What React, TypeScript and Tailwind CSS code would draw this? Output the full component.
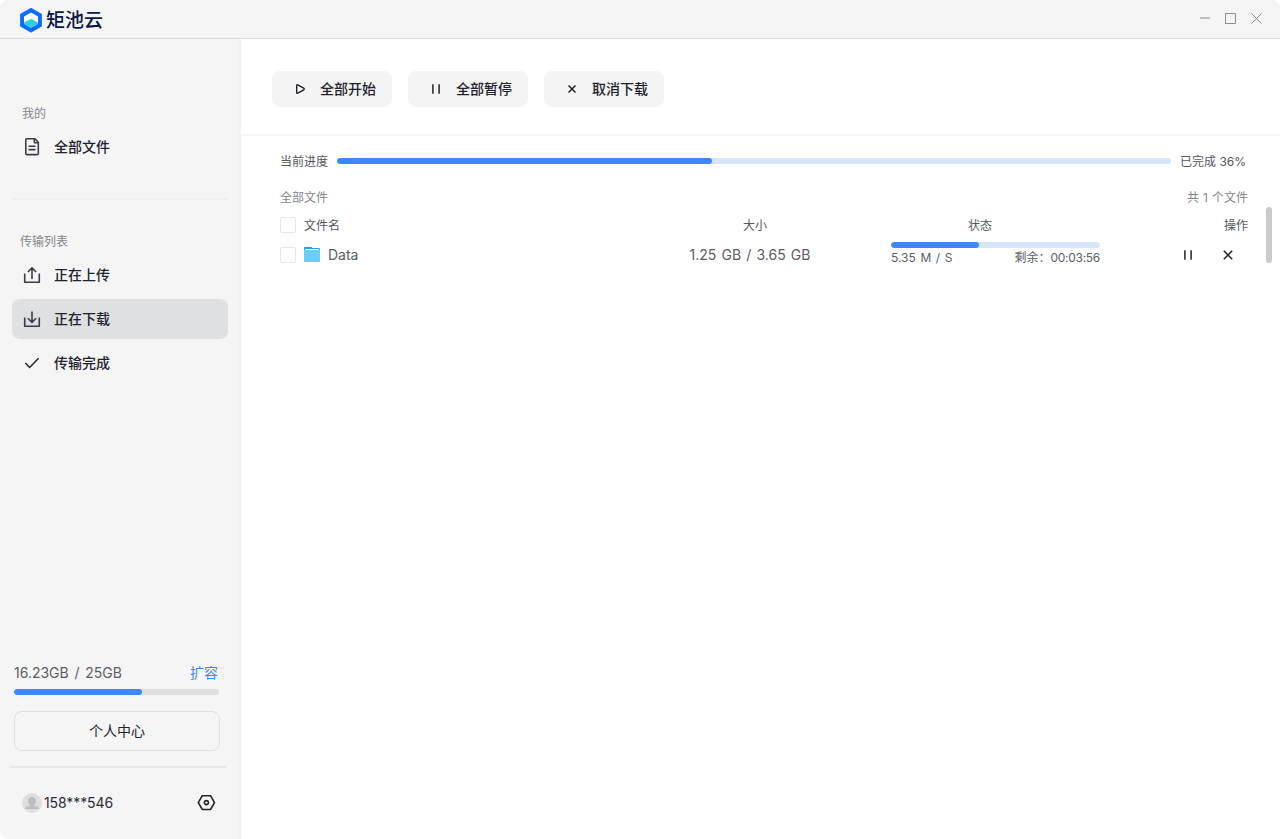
import type { ReactNode } from "react";
import clsx from "clsx";

const TABLE_GRID = "grid grid-cols-[370px_200px_41px_209px_148px] items-center";

function Logo() {
  return (
    <svg className="h-[26px] w-[22px]" viewBox="0 0 22 26" fill="none">
      <path d="M11 1.200 21.600 7.200v12L11 25.200.4 19.200v-12Z" fill="#0a6cff" stroke="#0a6cff" strokeWidth=".8" strokeLinejoin="round" />
      <path d="M11 5.400 18 9.400v7.400L11 20.800 4 16.800V9.400Z" fill="#fff" />
      <path d="M4 15.700 9.600 12.500q1.400-.8 2.800 0l5.600 3.200v1.100L11 20.800l-7-4Z" fill="#2bd0dc" />
    </svg>
  );
}

function FileIcon() {
  return (
    <svg className="h-5 w-5" viewBox="0 0 20 20" fill="none" stroke="#3c3c48" strokeWidth="1.600" strokeLinejoin="round">
      <path d="M4.600 1.800h8.400l3.300 3.400v11.400q0 1-1 1H4.800q-1 0-1-1V2.600q0-.8.8-.8Z" />
      <path d="M12.400 1.800v4h3.900" />
      <path d="M6.500 9.300h7M6.500 12.600h7" />
    </svg>
  );
}

function UploadIcon() {
  return (
    <svg className="h-5 w-5" viewBox="0 0 20 20" fill="none" stroke="#3c3c48" strokeWidth="1.600" strokeLinejoin="round">
      <path d="M2.700 8.500v8.700h14.600V8.500" />
      <path d="M10 14V3.200M5.900 7 10 2.900 14.100 7" />
    </svg>
  );
}

function DownloadIcon() {
  return (
    <svg className="h-5 w-5" viewBox="0 0 20 20" fill="none" stroke="#3c3c48" strokeWidth="1.600" strokeLinejoin="round">
      <path d="M2.700 8.500v8.700h14.600V8.500" />
      <path d="M10 2.500v10.700M5.900 9.300l4.100 4.100 4.100-4.100" />
    </svg>
  );
}

function DoneIcon() {
  return (
    <svg className="h-5 w-5" viewBox="0 0 20 20" fill="none" stroke="#22222e" strokeWidth="1.500">
      <path d="m3.400 10.100 4.200 4.300 9-9.200" />
    </svg>
  );
}

function PlayIcon() {
  return (
    <svg className="h-4 w-4" viewBox="0 0 16 16" fill="none" stroke="#22222e" strokeWidth="1.400" strokeLinejoin="round">
      <path d="M4.700 4.600q0-1.200 1.100-.8l5.900 3.300q1.100.8 0 1.700l-5.900 3.400q-1.100.4-1.100-.8Z" />
    </svg>
  );
}

function PauseIcon() {
  return (
    <svg className="h-4 w-4" viewBox="0 0 16 16" fill="none" stroke="#22222e" strokeWidth="1.500">
      <path d="M4.900 3.300v9.400M11.100 3.300v9.400" />
    </svg>
  );
}

function CancelIcon({ large }: { large?: boolean }) {
  return (
    <svg className="h-4 w-4" viewBox="0 0 16 16" fill="none" stroke="#22222e" strokeWidth="1.500">
      <path d={large ? "m3.800 3.800 8.400 8.400M12.200 3.800l-8.400 8.400" : "m4.500 4.500 7 7M11.500 4.500l-7 7"} />
    </svg>
  );
}

function FolderIcon() {
  return (
    <svg className="h-4 w-4" viewBox="0 0 16 16">
      <path d="M0 .8Q0 0 .8 0h6.700l1 1H15q1 0 1 1v3H0Z" fill="#3299dc" />
      <path d="M1 2h14v2H1Z" fill="#fff" />
      <path d="M0 3h16v11q0 1-1 1H1q-1 0-1-1Z" fill="#71caff" />
    </svg>
  );
}

function AvatarIcon() {
  return (
    <svg className="h-5 w-5" viewBox="0 0 20 20">
      <circle cx="10" cy="10" r="10" fill="#dedede" />
      <path d="M10 4c2.400 0 3.800 1.600 3.800 4 0 1.700-.7 3-1.800 3.700v.9l3.300 1.100c1 .4 1.400 1 1.400 2.300H3.300c0-1.300.4-1.900 1.400-2.300L8 12.600v-.9C6.900 11 6.200 9.700 6.200 8c0-2.400 1.400-4 3.800-4Z" fill="#bdbdbf" />
    </svg>
  );
}

function SettingsIcon() {
  return (
    <svg className="h-5 w-5" viewBox="0 0 20 20" fill="none" stroke="#22222e" strokeWidth="1.600" strokeLinejoin="round">
      <path d="M6.300 2.700h8.200l4 6.900-4 6.900H6.300l-4-6.900Z" />
      <circle cx="10.400" cy="9.600" r="2" />
    </svg>
  );
}

function NavItem({ icon, label, active }: { icon: ReactNode; label: string; active?: boolean }) {
  return (
    <a
      href="#"
      className={clsx(
        "flex h-10 items-center rounded-lg pl-2.5 text-sm font-medium text-[#22222e]",
        active && "bg-[#dfe0e2]"
      )}
    >
      {icon}
      <span className="ml-3">{label}</span>
    </a>
  );
}

function ToolbarButton({ icon, label }: { icon: ReactNode; label: string }) {
  return (
    <button className="flex h-9 w-[120px] items-center rounded-lg bg-[#f4f4f4] pl-5 text-sm font-medium text-[#22222e]">
      {icon}
      <span className="ml-3">{label}</span>
    </button>
  );
}

function ProgressBar({ percent, track, className }: { percent: number; track: string; className?: string }) {
  return (
    <div className={clsx("h-1.5 overflow-hidden rounded-full", track, className)}>
      <div className="h-full rounded-full bg-[#3d87ff]" style={{ width: `${percent}%` }} />
    </div>
  );
}

function Checkbox() {
  return <span className="h-4 w-4 shrink-0 rounded-[2px] border border-[#e6e6e6] bg-white" />;
}

function TitleBar() {
  return (
    <header className="flex h-[39px] shrink-0 items-center justify-between border-b border-[#d9d9d9] bg-[#f5f5f5] pr-[17px] pl-5">
      <div className="flex items-center pt-0.5">
        <Logo />
        <span className="ml-1 pt-0.5 text-[19px] leading-6 font-medium text-[#0b1746]">矩池云</span>
      </div>
      <div className="flex items-center gap-[13px] pb-0.5">
        <svg className="h-3 w-3" viewBox="0 0 12 12" stroke="#c0c0c0" strokeWidth="2">
          <path d="M1 6h10" />
        </svg>
        <svg className="h-[13px] w-[13px]" viewBox="0 0 13 13" fill="none" stroke="#8c8c8c">
          <path d="M1.500 1.500h10v10h-10Z" />
        </svg>
        <svg className="h-[13px] w-[13px]" viewBox="0 0 13 13" fill="none" stroke="#8c8c8c">
          <path d="m1.500 1.500 10 10M11.500 1.500l-10 10" />
        </svg>
      </div>
    </header>
  );
}

function Sidebar() {
  return (
    <aside className="flex w-[241px] shrink-0 flex-col border-r-2 border-[#f2f2f2] bg-[#f5f5f5]">
      <nav className="pt-16 pr-[11px] pl-3">
        <h2 className="pt-px pl-2.5 text-xs leading-5 text-[#85858b]">我的</h2>
        <div className="mt-[3px]">
          <NavItem icon={<FileIcon />} label="全部文件" />
        </div>
        <div className="mt-[31px] h-0.5 bg-[#efefef]" />
        <h2 className="mt-8 pl-2 text-xs leading-5 text-[#85858b]">传输列表</h2>
        <div className="mt-[3px] flex flex-col gap-1">
          <NavItem icon={<UploadIcon />} label="正在上传" />
          <NavItem icon={<DownloadIcon />} label="正在下载" active />
          <NavItem icon={<DoneIcon />} label="传输完成" />
        </div>
      </nav>
      <div className="mt-auto">
        <div className="mr-5 ml-3.5">
          <div className="flex items-center justify-between text-sm leading-5 text-[#5c5c65]">
            <span className="[word-spacing:1.8px]">16.23GB / 25GB</span>
            <a href="#" className="mr-px text-[#3d87ff]">扩容</a>
          </div>
          <ProgressBar percent={62.4} track="bg-[#dfdfe0]" className="mt-1.5" />
          <button className="mt-4 h-10 w-[206px] rounded-lg border border-[#dfdfe0] text-sm text-[#22222e]">个人中心</button>
        </div>
        <div className="mt-[15px] mr-[13px] ml-[9px] h-0.5 bg-[#e8e8e8]" />
        <div className="flex h-[71px] items-center pr-[23px] pb-0.5 pl-[22px]">
          <AvatarIcon />
          <span className="ml-0.5 text-sm tracking-[-0.1px] text-[#2c2c38]">158***546</span>
          <button className="ml-auto"><SettingsIcon /></button>
        </div>
      </div>
    </aside>
  );
}

function FileTable() {
  return (
    <div>
      <div className={clsx(TABLE_GRID, "h-6 text-xs text-[#55555e]")}>
        <div className="flex items-center gap-2">
          <Checkbox />
          <span className="pt-0.5">文件名</span>
        </div>
        <span className="pt-0.5 pl-2.5 text-center">大小</span>
        <span className="col-start-4 pt-0.5 pr-[31px] text-center">状态</span>
        <span className="pt-0.5 text-right">操作</span>
      </div>
      <div className={clsx(TABLE_GRID, "h-9 text-sm text-[#5c5c65]")}>
        <div className="flex items-center gap-2">
          <Checkbox />
          <FolderIcon />
          <span>Data</span>
        </div>
        <span className="text-center [word-spacing:1.2px]">1.25 GB / 3.65 GB</span>
        <div className="col-start-4 pb-0.5">
          <ProgressBar percent={42} track="bg-[#d5e5ff]" />
          <div className="mt-0.5 flex justify-between text-xs leading-4">
            <span className="[word-spacing:1.2px]">5.35 M / S</span>
            <span>剩余：<span className="tracking-[-0.28px]">00:03:56</span></span>
          </div>
        </div>
        <div className="flex items-center justify-end gap-6 pr-3">
          <PauseIcon />
          <CancelIcon large />
        </div>
      </div>
    </div>
  );
}

export default function App() {
  return (
    <div className="flex h-[839px] w-[1280px] flex-col overflow-hidden rounded-lg bg-white font-['Inter','Noto_Sans_CJK_SC',sans-serif]">
      <TitleBar />
      <div className="flex min-h-0 flex-1">
        <Sidebar />
        <main className="flex min-w-0 flex-1 flex-col">
          <div className="flex h-[97px] gap-4 border-b-2 border-[#f7f7f7] pt-8 pl-[31px]">
            <ToolbarButton icon={<PlayIcon />} label="全部开始" />
            <ToolbarButton icon={<PauseIcon />} label="全部暂停" />
            <ToolbarButton icon={<CancelIcon />} label="取消下载" />
          </div>
          <div className="flex items-start">
            <div className="ml-[39px] w-[968px] pt-[15px]">
              <div className="flex h-5 items-center text-xs text-[#55555e]">
                <span className="w-[57px] pt-0.5">当前进度</span>
                <ProgressBar percent={45} track="bg-[#d5e5ff]" className="w-[834px]" />
                <span className="ml-[9px] pt-0.5 whitespace-nowrap">已完成 36%</span>
              </div>
              <div className="mt-4 mb-1.5 flex h-5 items-center justify-between pt-0.5 text-xs text-[#85858b]">
                <span>全部文件</span>
                <span className="[word-spacing:0.7px]">共 1 个文件</span>
              </div>
              <FileTable />
            </div>
            <div className="mt-[71px] ml-[18px] h-14 w-1.5 rounded-full bg-[#cacaca]" />
          </div>
        </main>
      </div>
    </div>
  );
}
